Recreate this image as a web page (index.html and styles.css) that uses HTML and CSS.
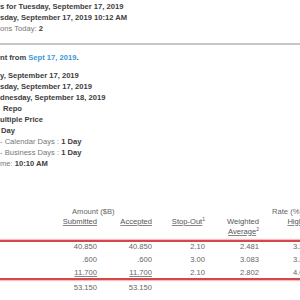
FILE: index.html
```html
<!DOCTYPE html>
<html>
<head>
<meta charset="utf-8">
<link rel="stylesheet" href="styles.css">
</head>
<body>
<div class="page">
  <div class="summary">
    <div class="line b">s for Tuesday, September 17, 2019</div>
    <div class="line b">sday, September 17, 2019 10:12 AM</div>
    <div class="line">ons Today: <b>2</b></div>
  </div>
  <hr class="rule">
  <div class="line b">nt from <span class="link">Sept 17, 2019</span>.</div>
  <div class="details">
    <div class="line b">y, September 17, 2019</div>
    <div class="line b">sday, September 17, 2019</div>
    <div class="line b">dnesday, September 18, 2019</div>
    <div class="line b ind">Repo</div>
    <div class="line b">ultiple Price</div>
    <div class="line b ind1">Day</div>
    <div class="line">- Calendar Days : <b>1 Day</b></div>
    <div class="line">- Business Days : <b>1 Day</b></div>
    <div class="line">me: <b>10:10 AM</b></div>
  </div>

  <div class="results">
    <div class="grid head1">
      <div class="amount">Amount ($B)</div>
      <div></div>
      <div></div>
      <div class="rate">Rate (%)</div>
    </div>
    <div class="grid head2">
      <div class="h"><span class="u">Submitted</span></div>
      <div class="h"><span class="u">Accepted</span></div>
      <div class="h"><span class="u">Stop-Out</span><sup>1</sup></div>
      <div class="h">Weighted<br><span class="u">Average</span><sup>2</sup></div>
      <div class="h hi"><span class="u">High</span></div>
    </div>
    <div class="box">
      <div class="grid row">
        <div>40.850</div><div>40.850</div><div>2.10</div><div>2.481</div><div class="hv">3.250</div>
      </div>
      <div class="grid row">
        <div>.600</div><div>.600</div><div>3.00</div><div>3.083</div><div class="hv">3.250</div>
      </div>
      <div class="grid row">
        <div><span class="u">11.700</span></div><div><span class="u">11.700</span></div><div>2.10</div><div>2.802</div><div class="hv">4.000</div>
      </div>
    </div>
    <div class="grid row total">
      <div>53.150</div><div>53.150</div><div></div><div></div><div></div>
    </div>
  </div>
</div>
</body>
</html>
```

FILE: styles.css
```css
html, body {
  margin: 0;
  padding: 0;
  background: #ffffff;
  overflow: hidden;
}

.page {
  width: 300px;
  font-family: "Liberation Sans", Arial, sans-serif;
  font-size: 7.6px;
  color: #777;
  padding-top: 0.5px;
}

.line {
  line-height: 11px;
  white-space: nowrap;
}

.b, b {
  font-weight: bold;
  color: #3d3d3d;
}

.ind { padding-left: 3px; }
.ind1 { padding-left: 1px; }

.rule {
  border: 0;
  height: 2px;
  background: #c6c6c6;
  margin: 9px 0 7.5px 0;
}

.link {
  color: #3a98d6;
}

.details {
  margin-top: 7px;
}

.results {
  margin-top: 37.5px;
  color: #666;
}

.grid {
  display: grid;
  grid-template-columns: 97px 55px 53px 54px 60px;
  width: 319px;
}

.grid > div {
  text-align: right;
  white-space: nowrap;
}

.head1 {
  line-height: 10px;
}

.head1 .amount {
  grid-column: 1 / span 2;
  text-align: left;
  padding-left: 72px;
}

.head1 .rate {
  text-align: left;
  padding-left: 13px;
}

.head2 {
  line-height: 10px;
  color: #555;
}

.u {
  text-decoration: underline;
  text-decoration-color: #888;
}

sup {
  font-size: 5px;
  line-height: 0;
  vertical-align: 3px;
}

.head2 .hi {
  padding-right: 16px;
}

.box {
  margin-top: 3px;
  border-top: 2px solid #d5474c;
  border-bottom: 2px solid #d5474c;
  box-shadow: 0 -1px 1px rgba(213, 71, 76, 0.35), 0 1px 1px rgba(213, 71, 76, 0.35);
  display: flex;
  flex-direction: column;
  gap: 3px;
  width: 319px;
}

.row {
  line-height: 10px;
  color: #666;
}

.row .hv {
  padding-right: 7px;
}

.total {
  margin-top: 3px;
}
```
